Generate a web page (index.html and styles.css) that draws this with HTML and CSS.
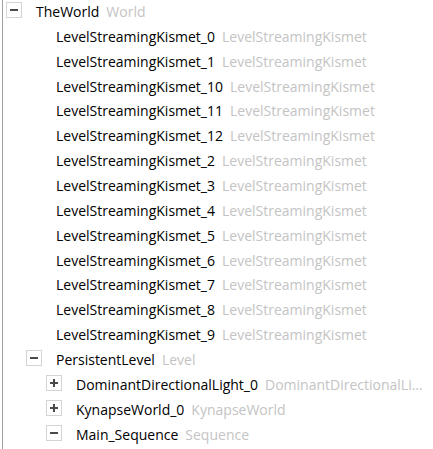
FILE: index.html
```html
<!DOCTYPE html>
<html lang="en">
<head>
    <meta charset="UTF-8">
    <title>World Outliner</title>
    <link rel="stylesheet" href="styles.css">
</head>
<body>
    <div class="tree">
        <div class="row level-0">
            <span class="toggle minus"></span>
            <span class="name">TheWorld</span><span class="type">World</span>
        </div>
        <div class="row level-1 leaf"><span class="name">LevelStreamingKismet_0</span><span class="type">LevelStreamingKismet</span></div>
        <div class="row level-1 leaf"><span class="name">LevelStreamingKismet_1</span><span class="type">LevelStreamingKismet</span></div>
        <div class="row level-1 leaf"><span class="name">LevelStreamingKismet_10</span><span class="type">LevelStreamingKismet</span></div>
        <div class="row level-1 leaf"><span class="name">LevelStreamingKismet_11</span><span class="type">LevelStreamingKismet</span></div>
        <div class="row level-1 leaf"><span class="name">LevelStreamingKismet_12</span><span class="type">LevelStreamingKismet</span></div>
        <div class="row level-1 leaf"><span class="name">LevelStreamingKismet_2</span><span class="type">LevelStreamingKismet</span></div>
        <div class="row level-1 leaf"><span class="name">LevelStreamingKismet_3</span><span class="type">LevelStreamingKismet</span></div>
        <div class="row level-1 leaf"><span class="name">LevelStreamingKismet_4</span><span class="type">LevelStreamingKismet</span></div>
        <div class="row level-1 leaf"><span class="name">LevelStreamingKismet_5</span><span class="type">LevelStreamingKismet</span></div>
        <div class="row level-1 leaf"><span class="name">LevelStreamingKismet_6</span><span class="type">LevelStreamingKismet</span></div>
        <div class="row level-1 leaf"><span class="name">LevelStreamingKismet_7</span><span class="type">LevelStreamingKismet</span></div>
        <div class="row level-1 leaf"><span class="name">LevelStreamingKismet_8</span><span class="type">LevelStreamingKismet</span></div>
        <div class="row level-1 leaf"><span class="name">LevelStreamingKismet_9</span><span class="type">LevelStreamingKismet</span></div>
        <div class="row level-1">
            <span class="toggle minus"></span>
            <span class="name">PersistentLevel</span><span class="type">Level</span>
        </div>
        <div class="row level-2">
            <span class="toggle plus"></span>
            <span class="name">DominantDirectionalLight_0</span><span class="type">DominantDirectionalLight</span>
        </div>
        <div class="row level-2">
            <span class="toggle plus"></span>
            <span class="name">KynapseWorld_0</span><span class="type">KynapseWorld</span>
        </div>
        <div class="row level-2">
            <span class="toggle minus"></span>
            <span class="name">Main_Sequence</span><span class="type">Sequence</span>
        </div>
    </div>
</body>
</html>
```

FILE: styles.css
```css
body, html {
    margin: 0;
    padding: 0;
    background-color: #fff;
    font-family: "Open Sans", "Noto Sans", sans-serif;
    font-size: 14px;
}

.tree {
    margin-left: 2px;
    border-left: 1px solid #a0a0a0;
    height: 449px;
    overflow: hidden;
    padding-right: 6px;
}

.row {
    display: flex;
    align-items: center;
    box-sizing: border-box;
    height: 24.86px;
    padding-bottom: 2px;
    white-space: nowrap;
    color: #000;
    min-width: 0;
}

.level-0 { padding-left: 3px; }
.level-1 { padding-left: 23px; }
.level-2 { padding-left: 43px; }

.leaf {
    padding-left: 53px;
}

.toggle {
    position: relative;
    flex: none;
    width: 14px;
    height: 14px;
    border: 1px solid #d4d4d4;
    margin-right: 14px;
    margin-top: -2px;
}

.toggle::before,
.toggle::after {
    content: "";
    position: absolute;
    background-color: #4a4a4a;
}

.toggle::before {
    left: 3px;
    top: 6px;
    width: 8px;
    height: 2px;
}

.toggle.plus::after {
    left: 6px;
    top: 3px;
    width: 2px;
    height: 8px;
}

.name {
    flex: none;
}

.type {
    color: #c4c4c4;
    margin-left: 7px;
    min-width: 0;
    overflow: hidden;
    text-overflow: ellipsis;
}
```
